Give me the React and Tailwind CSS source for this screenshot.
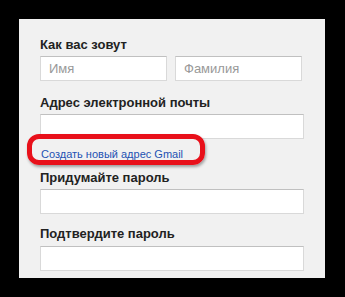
export default function App() {
  const label = "block text-[13px] leading-4 font-bold text-[#222]"
  const input =
    "block h-[25px] border border-[#d9d9d9] border-t-[#c0c0c0] bg-white px-2 text-[13px] text-[#222] placeholder:text-[#999] outline-none"

  return (
    <div className="h-[297px] w-[345px] bg-black pt-[19px] pl-[19px]" style={{ fontFamily: '"Liberation Sans", Arial, sans-serif' }}>
      <div className="h-[259px] w-[306px] bg-[#f1f1f1] pl-[21px] pt-[18px]">
        {/* Name */}
        <label className={label}>Как вас зовут</label>
        <div className="mt-[3px] flex gap-2">
          <input className={input + " w-[127px]"} placeholder="Имя" />
          <input className={input + " w-[127px]"} placeholder="Фамилия" />
        </div>

        {/* Email */}
        <label className={label + " mt-[14px]"}>Адрес электронной почты</label>
        <input className={input + " mt-[3px] w-[264px]"} />

        {/* Create Gmail link, circled */}
        <div className="relative mt-[2px] h-[16px]">
          <div className="pointer-events-none absolute left-[-13px] top-[-7px] h-[31px] w-[178px] rounded-[12px] border-[5px] border-[#e8101a] shadow-[1px_2px_3px_rgba(0,0,0,0.35)]" />
          <span className="relative ml-px cursor-pointer text-[11px] leading-4 text-[#2451b3]">
            Создать новый адрес Gmail
          </span>
        </div>

        {/* Password */}
        <label className={label + " mt-[13px]"}>Придумайте пароль</label>
        <input type="password" className={input + " mt-[3px] w-[264px]"} />

        {/* Confirm */}
        <label className={label + " mt-[12px]"}>Подтвердите пароль</label>
        <input type="password" className={input + " mt-[4px] w-[264px]"} />
      </div>
    </div>
  )
}
